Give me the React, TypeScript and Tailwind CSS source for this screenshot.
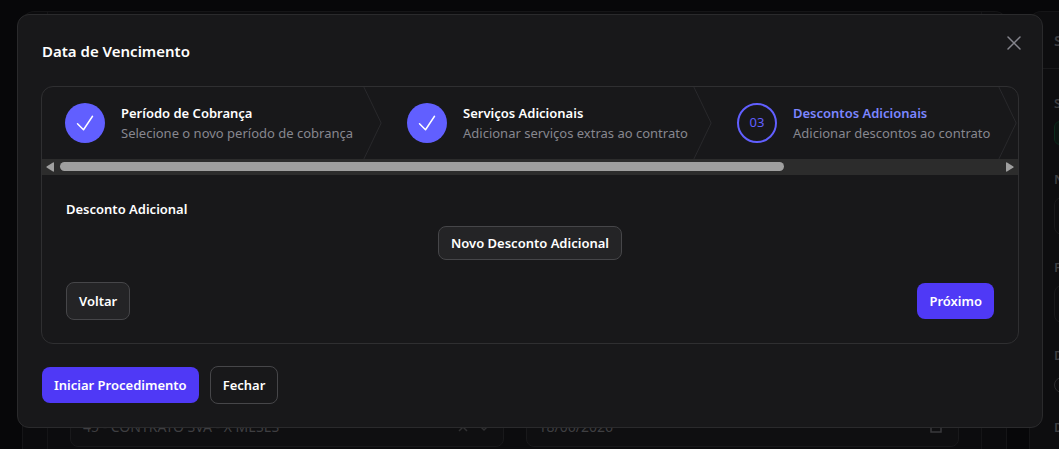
import { clsx } from 'clsx';
import type { ReactNode } from 'react';

type StepStatus = 'done' | 'current';

interface StepItem {
    title: string;
    description: string;
    status: StepStatus;
    width: string;
}

const steps: StepItem[] = [
    { title: 'Período de Cobrança', description: 'Selecione o novo período de cobrança', status: 'done', width: 'w-[342px]' },
    { title: 'Serviços Adicionais', description: 'Adicionar serviços extras ao contrato', status: 'done', width: 'w-[330px]' },
    { title: 'Descontos Adicionais', description: 'Adicionar descontos ao contrato', status: 'current', width: 'w-[305px]' },
];

const Button = ({ variant, small, children }: { variant: 'primary' | 'filled' | 'outline'; small?: boolean; children: ReactNode }) => (
    <button
        type="button"
        className={clsx(
            'rounded-lg text-[13px] leading-5 font-semibold text-white whitespace-nowrap',
            variant === 'primary' && 'bg-[#4f39f6] px-3 py-2',
            variant === 'filled' && 'border border-[#464649] bg-[#242426] px-3',
            variant === 'outline' && 'border border-[#464649] px-3 py-2',
            variant === 'filled' && (small ? 'py-1.5' : 'py-2'),
        )}
    >
        {children}
    </button>
)

const Step = ({ step, index }: { step: StepItem; index: number }) => {
    const done = step.status === 'done';

    return (
        <li className={clsx('relative flex h-[72px] shrink-0 items-center gap-4 pl-6', step.width)} aria-current={done ? undefined : 'step'}>
            <span
                className={clsx(
                    'flex size-10 shrink-0 items-center justify-center rounded-full',
                    done ? 'bg-[#615fff]' : 'border-2 border-[#615fff] text-[13px] text-[#615fff]',
                )}
            >
                {done ? (
                    <svg viewBox="0 0 24 24" className="size-6" fill="none" stroke="white" strokeWidth="1.5" strokeLinecap="round" strokeLinejoin="round" aria-hidden="true">
                        <path d="m4.5 12.75 6 6 9-13.5" />
                    </svg>
                ) : (
                    `0${index + 1}`
                )}
            </span>
            <div className="text-[13px] leading-5 whitespace-nowrap">
                <p className={clsx('font-semibold', done ? 'text-white' : 'text-[#7c86ff]')}>{step.title}</p>
                <p className="text-[#87878f]">{step.description}</p>
            </div>
            <svg viewBox="0 0 22 80" preserveAspectRatio="none" fill="none" className="absolute top-0 right-0 h-full w-5 text-[#29292c]" aria-hidden="true">
                <path d="M0 -2L20 40L0 82" stroke="currentColor" vectorEffect="non-scaling-stroke" strokeLinejoin="round" />
            </svg>
        </li>
    )
}

const ScrollBar = () => (
    <div className="flex h-4 items-center justify-between bg-[#2c2c2c] px-1" aria-hidden="true">
        <svg viewBox="0 0 8 10" className="h-2.5 w-2 shrink-0" fill="#9f9f9f">
            <path d="M8 1v8q0 1-1 .6L.6 5.6Q0 5 .6 4.4L7 .4Q8 0 8 1Z" />
        </svg>
        <div className="mx-1.5 flex-1 pb-px">
            <div className="h-[9px] w-[77%] rounded-full bg-[#9f9f9f]" />
        </div>
        <svg viewBox="0 0 8 10" className="h-2.5 w-2 shrink-0" fill="#9f9f9f">
            <path d="M0 1v8q0 1 1 .6l6.4-4q.6-.6 0-1.2L1 .4Q0 0 0 1Z" />
        </svg>
    </div>
)

const Backdrop = () => (
    <div className="flex h-screen gap-[22px] overflow-hidden bg-[#070709] pt-[11px] pl-[22px] text-[14px] leading-5 text-[#3f3f42]" aria-hidden="true">
        <div className="flex flex-1 flex-col justify-end rounded-t-xl border border-b-0 border-[#151517] bg-[#0b0b0d] px-6">
            <div className="flex flex-1 items-end gap-[22px] border-x border-[#151517] bg-[#0c0c0e] px-[22px] pb-0.5">
                <div className="flex h-10 flex-1 items-center justify-between rounded-lg border border-[#19191b] bg-[#0f0f11] px-3">
                    <span>45 - CONTRATO SVA - X MESES</span>
                    <svg viewBox="0 0 36 16" className="h-4 w-9" fill="none" stroke="#303032" strokeWidth="1.5">
                        <path d="M4 4l8 8M12 4l-8 8M25 7l4 4 4-4" />
                    </svg>
                </div>
                <div className="flex h-10 flex-1 items-center justify-between rounded-lg border border-[#19191b] bg-[#0f0f11] px-3">
                    <span>18/06/2026</span>
                    <svg viewBox="0 0 16 16" className="mr-0.5 size-4" fill="none" stroke="#3a3a3c" strokeWidth="1.5">
                        <path d="M3 3h10v10H3zM3 6h10" />
                    </svg>
                </div>
            </div>
        </div>
        <div className="w-[30px] shrink-0 overflow-hidden rounded-tl-xl border-t border-l border-[#151517] bg-[#0d0d0f] text-[13px] font-semibold">
            <div className="flex h-[57px] items-center border-b border-[#19191b] pl-6 text-[15px]">S</div>
            <div className="pt-6 pl-6">
                <p>S</p>
                <div className="mt-2 h-6 w-20 rounded-md border border-[#0b2a1c] bg-[#0b1511]" />
                <p className="mt-6">N</p>
                <div className="mt-2 h-[38px] w-40 rounded-lg border border-[#19191b]" />
                <p className="mt-[22px]">F</p>
                <div className="mt-2 h-[38px] w-40 rounded-lg border border-[#19191b]" />
                <p className="mt-[22px]">D</p>
                <div className="mt-3 h-4 w-8 rounded-full border border-[#2a2a2c]" />
                <p className="mt-6">D</p>
            </div>
        </div>
    </div>
)

const App = () => {
    return (
        <div className="font-['Noto_Sans','Open_Sans',sans-serif]">
            <Backdrop />
            <div className="fixed inset-0 px-4 pt-3.5 pl-[17px]">
                <section role="dialog" aria-labelledby="dialog-title" className="rounded-xl border border-[#2a2a2c] bg-[#18181a] px-6 pt-6 pb-[23px]">
                    <header className="flex h-6 items-center justify-between">
                        <h1 id="dialog-title" className="text-[15px] leading-6 font-semibold text-white">Data de Vencimento</h1>
                        <button type="button" aria-label="Fechar janela" className="-mt-4 -mr-2 text-[#85858d]">
                            <svg viewBox="0 0 24 24" className="size-6" fill="none" stroke="currentColor" strokeWidth="1.5" strokeLinecap="round" aria-hidden="true">
                                <path d="M6 18 18 6M6 6l12 12" />
                            </svg>
                        </button>
                    </header>

                    <div className="-mx-px mt-[23px] overflow-hidden rounded-xl border border-[#2f2f31]">
                        <ol className="-ml-px flex overflow-hidden">
                            {steps.map((step, index) => (
                                <Step key={step.title} step={step} index={index} />
                            ))}
                        </ol>
                        <ScrollBar />
                        <div className="px-6 pt-6 pb-[23px]">
                            <h2 className="text-[13px] leading-5 font-semibold text-white">Desconto Adicional</h2>
                            <div className="mt-[7px] flex justify-center">
                                <Button variant="filled" small>Novo Desconto Adicional</Button>
                            </div>
                            <div className="mt-[22px] flex items-center justify-between">
                                <Button variant="filled">Voltar</Button>
                                <Button variant="primary">Próximo</Button>
                            </div>
                        </div>
                    </div>

                    <footer className="mt-[22px] flex items-center gap-[11px]">
                        <Button variant="primary">Iniciar Procedimento</Button>
                        <Button variant="outline">Fechar</Button>
                    </footer>
                </section>
            </div>
        </div>
    )
}

export default App
